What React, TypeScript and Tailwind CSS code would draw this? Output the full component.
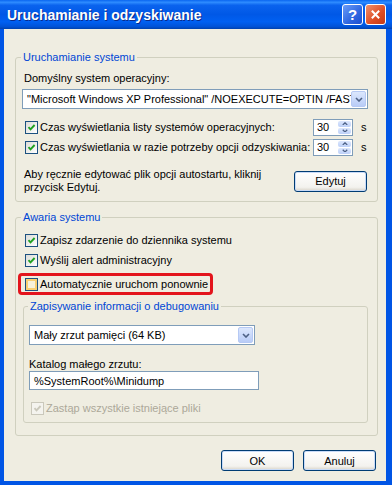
import clsx from "clsx";
import type { ReactNode } from "react";

function Check({ checked, hover, disabled, className }: { checked?: boolean; hover?: boolean; disabled?: boolean; className?: string }) {
  return (
    <span
      className={clsx(
        "relative flex size-[13px] shrink-0 items-center justify-center border",
        disabled
          ? "border-[#CAC8BB] bg-[#F4F3EE]"
          : "border-[#1C5180] bg-[linear-gradient(135deg,#DCDCD7,#FFFFFF)]",
        className
      )}
    >
      {hover && <span className="absolute inset-0 border-2 border-[#F8CF72] bg-[#F6F1DA]" />}
      {checked && (
        <svg viewBox="0 0 11 11" className="relative size-[11px]">
          <path d="M2.5 5.2 L4.5 7.3 L8.6 3" fill="none" stroke={disabled ? "#CAC8BB" : "#21A121"} strokeWidth="1.9" />
        </svg>
      )}
    </span>
  );
}

function Chevron({ up, size = 7 }: { up?: boolean; size?: number }) {
  return (
    <svg viewBox="0 0 8 5" width={size} height={(size * 5) / 8}>
      <path d={up ? "M1 4 L4 1 L7 4" : "M1 1 L4 4 L7 1"} fill="none" stroke="#4D6185" strokeWidth="1.6" />
    </svg>
  );
}

function Combo({ text, className }: { text: string; className?: string }) {
  return (
    <div className={clsx("flex min-w-0 border border-[#7F9DB9] bg-white p-[1px]", className)}>
      <span className="min-w-0 flex-1 overflow-hidden whitespace-nowrap pl-[3px] leading-[16px]">{text}</span>
      <span className="flex w-[15px] shrink-0 items-center justify-center rounded-[2px] border border-[#B6C9F4] bg-[linear-gradient(#DCE7FD,#B9CCF7)]">
        <Chevron size={8} />
      </span>
    </div>
  );
}

function Spinner() {
  return (
    <div className="ml-auto flex h-[17px] w-[40px] shrink-0 border border-[#7F9DB9] bg-white p-[1px]">
      <span className="flex-1 pl-[2px] leading-[13px]">30</span>
      <div className="flex w-[13px] flex-col gap-[1px]">
        <span className="flex flex-1 items-center justify-center rounded-[2px] bg-[linear-gradient(#DCE7FD,#BDD0F8)]">
          <Chevron up size={6} />
        </span>
        <span className="flex flex-1 items-center justify-center rounded-[2px] bg-[linear-gradient(#DCE7FD,#BDD0F8)]">
          <Chevron size={6} />
        </span>
      </div>
    </div>
  );
}

function XPButton({ children, className }: { children: ReactNode; className?: string }) {
  return (
    <button
      className={clsx(
        "flex h-[21px] w-[73px] shrink-0 items-center justify-center rounded-[3px] border border-[#003C74] bg-[linear-gradient(#FFFFFF,#F3F2EE_80%,#D8D3C8)] shadow-[inset_0_0_0_1px_#C9DBF7]",
        className
      )}
    >
      {children}
    </button>
  );
}

function Group({ title, children, className, legendClass }: { title: string; children: ReactNode; className?: string; legendClass?: string }) {
  return (
    <fieldset className={clsx("min-w-0 rounded-[3px] border border-[#D0D0BF] p-0", className)}>
      <legend className={clsx("px-[2px] leading-[14px] text-[#0046D5]", legendClass)}>{title}</legend>
      {children}
    </fieldset>
  );
}

export default function App() {
  return (
    <div className="flex h-[485px] w-[392px] flex-col overflow-hidden bg-[#0055E5] font-['Liberation_Sans',Arial,sans-serif] text-[11px] leading-[14px] text-black">
      {/* Title bar */}
      <div className="flex h-[29px] shrink-0 items-center bg-[linear-gradient(#0A66F0,#2E8CFF_8%,#0A63EE_18%,#0058E6_50%,#0060F2_75%,#0052D6_92%,#0041AD)] pl-[7px] pr-[6px]">
        <span className="flex-1 text-[14px] font-bold text-white [text-shadow:1px_1px_0_#0A2A8A]">Uruchamianie i odzyskiwanie</span>
        <div className="flex gap-[2px]">
          <span className="flex size-[21px] items-center justify-center rounded-[3px] border border-white bg-[linear-gradient(135deg,#6A9CF8,#2E66E0_60%,#1C4FD0)] text-[15px] font-bold text-white">?</span>
          <span className="flex size-[21px] items-center justify-center rounded-[3px] border border-white bg-[linear-gradient(135deg,#F0906C,#DD4C24_60%,#C33A15)]">
            <svg viewBox="0 0 12 12" className="size-[11px]">
              <path d="M2 2 L10 10 M10 2 L2 10" stroke="#fff" strokeWidth="2.2" />
            </svg>
          </span>
        </div>
      </div>

      {/* Body */}
      <div className="mb-[4px] ml-[4px] mr-[6px] flex min-w-0 flex-1 flex-col bg-[#EFEDE1]">
        <Group title="Uruchamianie systemu" className="ml-[11px] mr-[8px] mt-[21px]" legendClass="ml-[5px]">
          <div className="flex flex-col pb-[7px] pl-[6px] pr-[9px]">
            <span className="ml-[2px] mt-[7px]">Domyślny system operacyjny:</span>
            <Combo className="mt-[4px] h-[20px]" text={'"Microsoft Windows XP Professional" /NOEXECUTE=OPTIN /FASTDETECT'} />
            <div className="mt-[8px] flex h-[20px] items-center">
              <Check checked className="ml-[3px]" />
              <span className="ml-[2px] whitespace-nowrap">Czas wyświetlania listy systemów operacyjnych:</span>
              <Spinner />
              <span className="ml-[8px] w-[7px]">s</span>
            </div>
            <div className="flex h-[20px] items-center">
              <Check checked className="ml-[3px]" />
              <span className="ml-[2px] whitespace-nowrap">Czas wyświetlania w razie potrzeby opcji odzyskiwania:</span>
              <Spinner />
              <span className="ml-[8px] w-[7px]">s</span>
            </div>
            <div className="mt-[11px] flex items-center">
              <p className="ml-[2px] leading-[13px]">
                Aby ręcznie edytować plik opcji autostartu, kliknij
                <br />
                przycisk Edytuj.
              </p>
              <XPButton className="ml-auto mr-[1px]">Edytuj</XPButton>
            </div>
          </div>
        </Group>

        <Group title="Awaria systemu" className="ml-[11px] mr-[8px] mt-[8px]" legendClass="ml-[5px]">
          <div className="flex flex-col pb-[12px] pl-[2px]">
            <div className="ml-[7px] mt-[6px] flex h-[20px] items-center">
              <Check checked />
              <span className="ml-[2px]">Zapisz zdarzenie do dziennika systemu</span>
            </div>
            <div className="ml-[7px] flex h-[20px] items-center">
              <Check checked />
              <span className="ml-[2px]">Wyślij alert administracyjny</span>
            </div>
            <div className="mt-[3px] flex h-[22px] w-[195px] items-center rounded-[4px] border-[3px] border-[#E3141C] pl-[4px]">
              <Check hover />
              <span className="ml-[2px]">Automatycznie uruchom ponownie</span>
            </div>

            <Group title="Zapisywanie informacji o debugowaniu" className="ml-[5px] mr-[9px] mt-[4px]" legendClass="ml-[4px]">
              <div className="flex flex-col pb-[6px] pl-[5px]">
                <Combo className="mt-[12px] h-[20px] w-[226px]" text="Mały zrzut pamięci (64 KB)" />
                <span className="mt-[12px]">Katalog małego zrzutu:</span>
                <div className="flex h-[19px] w-[230px] items-center border border-[#7F9DB9] bg-white pl-[4px]">%SystemRoot%\Minidump</div>
                <div className="ml-[2px] mt-[10px] flex h-[16px] items-center text-[#ACA899]">
                  <Check checked disabled />
                  <span className="ml-[2px]">Zastąp wszystkie istniejące pliki</span>
                </div>
              </div>
            </Group>
          </div>
        </Group>

        <div className="mr-[10px] mt-[14px] flex justify-end gap-[9px]">
          <XPButton className="w-[72px]">OK</XPButton>
          <XPButton className="w-[72px]">Anuluj</XPButton>
        </div>
      </div>
    </div>
  );
}
